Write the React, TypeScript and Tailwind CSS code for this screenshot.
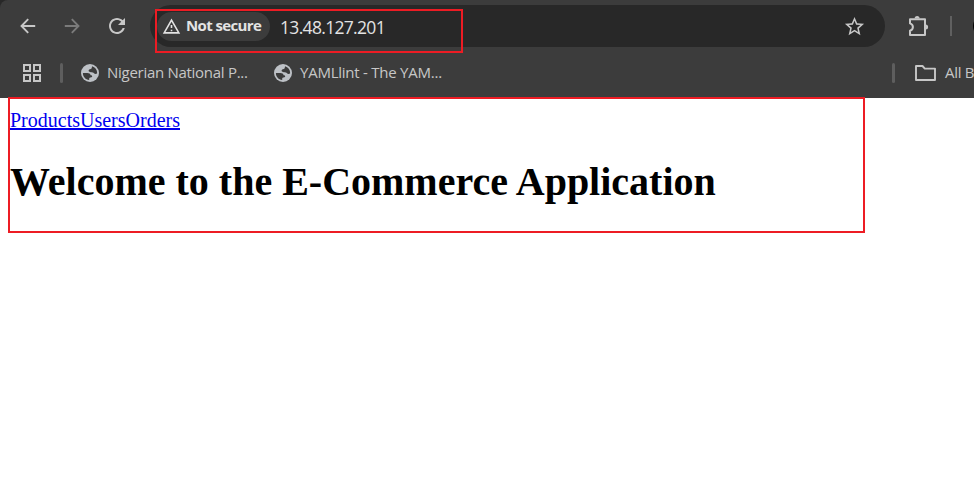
import React from "react";

function Globe() {
  return (
    <svg className="h-[18px] w-[18px] shrink-0" viewBox="0 0 18 18">
      <circle cx="9" cy="9" r="9" fill="#bdc1c6" />
      <path
        d="M11 2.3 C14.2 3.2 16.2 5.8 16.2 9.2 C15.4 10.3 13.6 10.3 13 9.2 C12.5 8.3 11.4 8.4 9.8 8.3 C7.6 8.1 7 6.6 8.2 5.6 C9 4.9 10.8 5.1 10.8 3.8 Z"
        fill="#3c3c3c"
      />
      <path
        d="M1.9 9 H6.2 C8.2 9 9.4 9.9 9.6 11.3 C10.8 11.3 11.6 12 11 12.9 C10.4 13.6 8.4 13.2 8.2 14.4 V16.1 C4.6 15.6 1.9 13 1.9 9 Z"
        fill="#3c3c3c"
      />
    </svg>
  );
}

function Arrow({ className }: { className: string }) {
  return (
    <svg className={className} viewBox="0 0 16 16" fill="none" stroke="currentColor" strokeWidth="1.9">
      <path d="M15.2 8H1.8M8.2 1.2L1.5 8l6.7 6.8" />
    </svg>
  );
}

function AddressBar() {
  return (
    <div className="flex h-[42px] w-[735px] items-center rounded-full bg-[#282828] pl-[7px]">
      <div className="flex h-[29px] w-[113px] items-center rounded-full bg-[#3c3c3c] pl-[5px] text-[#e3e3e3]">
        <svg className="h-[19px] w-[19px] shrink-0" viewBox="0 0 24 24" fill="currentColor">
          <path d="M12 5.99L19.53 19H4.47L12 5.99M12 2L1 21h22L12 2zm1 14h-2v2h2v-2zm0-6h-2v4h2v-4z" />
        </svg>
        <span className="-mt-[2px] ml-[5px] text-[15px] leading-5 font-bold tracking-[-0.62px] whitespace-nowrap">Not secure</span>
      </div>
      <span className="mt-px ml-[10px] text-[17.5px] leading-6 tracking-[-0.68px] text-[#e3e3e3]">13.48.127.201</span>
      <svg className="mr-[19px] ml-auto h-[23px] w-[23px] text-[#c7c7c7]" viewBox="0 0 24 24" fill="currentColor">
        <path d="M22 9.24l-7.19-.62L12 2 9.19 8.63 2 9.24l5.46 4.73L5.82 21 12 17.27 18.18 21l-1.63-7.03L22 9.24zM12 15.4l-3.76 2.27 1-4.28-3.32-2.88 4.38-.38L12 6.1l1.71 4.04 4.38.38-3.32 2.88 1 4.28L12 15.4z" />
      </svg>
    </div>
  );
}

export default function App() {
  return (
    <div className="relative h-[477px] w-[974px] overflow-hidden bg-white">
      <header className="h-[98px] overflow-hidden bg-[#282828] font-['Open_Sans',sans-serif] text-[#c7c7c7]">
        <div className="h-full rounded-tl-[8px] bg-[#3c3c3c]">
          <div className="flex h-[52px] items-center pl-5">
            <Arrow className="h-4 w-4 shrink-0" />
            <Arrow className="ml-[28px] h-4 w-4 shrink-0 rotate-180 text-[#7b7b7b]" />
            <svg className="ml-[25px] h-6 w-6 shrink-0" viewBox="0 0 24 24" fill="currentColor">
              <path d="M17.65 6.35C16.2 4.9 14.21 4 12 4c-4.42 0-7.99 3.58-7.99 8s3.57 8 7.99 8c3.73 0 6.84-2.55 7.73-6h-2.08c-.82 2.33-3.04 4-5.65 4-3.31 0-6-2.69-6-6s2.69-6 6-6c1.66 0 3.14.69 4.22 1.78L13 11h7V4l-2.35 2.35z" />
            </svg>
            <div className="ml-[21px] shrink-0">
              <AddressBar />
            </div>
            <svg className="-mt-px ml-[22px] h-[22px] w-[22px] shrink-0" viewBox="0 0 22 22" fill="none" stroke="currentColor" strokeWidth="2" strokeLinejoin="round">
              <path d="M3 4.2H18V20H3V15.8C4.8 15.2 5.9 13.8 5.9 12.1S4.8 9 3 8.4Z" />
              <path d="M7.6 3.6A2.5 2.5 0 0 1 12.6 3.6ZM18.6 9.6A2.5 2.5 0 0 1 18.6 14.6Z" fill="currentColor" stroke="none" />
            </svg>
            <div className="ml-[21px] h-5 w-[2px] shrink-0 bg-[#606060]" />
            <div className="ml-[21px] h-[22px] w-[22px] shrink-0 rounded-full bg-black" />
          </div>
          <div className="flex h-[41px] items-center pl-[23px] text-[15px] leading-5 whitespace-nowrap">
            <svg className="h-[18px] w-[18px] shrink-0" viewBox="0 0 18 18" fill="none" stroke="currentColor" strokeWidth="2">
              <path d="M1 1h6v6H1zM11 1h6v6h-6zM1 11h6v6H1zM11 11h6v6h-6z" />
            </svg>
            <div className="ml-[19px] h-5 w-[3px] shrink-0 rounded bg-[#5e5e5e]" />
            <div className="ml-[18px] flex w-[193px] shrink-0 items-center gap-2">
              <Globe />
              <span className="-mt-px tracking-[-0.28px]">Nigerian National P...</span>
            </div>
            <div className="flex w-[618px] shrink-0 items-center gap-2">
              <Globe />
              <span className="-mt-px tracking-[-0.24px]">YAMLlint - The YAM...</span>
            </div>
            <div className="h-5 w-[3px] shrink-0 rounded bg-[#5e5e5e]" />
            <svg className="ml-5 h-4 w-[21px] shrink-0" viewBox="0 0 21 16" fill="none" stroke="currentColor" strokeWidth="1.9" strokeLinejoin="round">
              <path d="M1 1h6.5l2.3 2.6H20V15H1z" />
            </svg>
            <span className="-mt-px ml-[9px] shrink-0 tracking-[-0.3px]">All B</span>
          </div>
        </div>
      </header>
      <main className="pt-[11px] pl-[10px] font-['Liberation_Serif',serif]">
        <nav className="flex text-[20px] leading-[23px] text-[#0000ee] underline">
          <a href="#products">Products</a>
          <a href="#users">Users</a>
          <a href="#orders">Orders</a>
        </nav>
        <h1 className="mt-[27px] text-[40px] leading-[46px] font-bold text-black">Welcome to the E-Commerce Application</h1>
      </main>
      <div className="pointer-events-none absolute top-[9px] left-[155px] h-[44px] w-[308px] border-2 border-[#ed1c24]" />
      <div className="pointer-events-none absolute top-[97px] left-[8px] h-[136px] w-[857px] border-2 border-[#ed1c24]" />
    </div>
  );
}
